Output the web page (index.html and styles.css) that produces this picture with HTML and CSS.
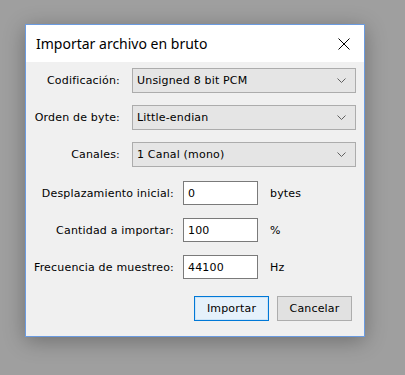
FILE: index.html
```html
<!DOCTYPE html>
<html>
<head>
<meta charset="utf-8">
<link rel="stylesheet" href="styles.css">
</head>
<body>
<div class="dialog">
  <div class="titlebar">
    <span class="title">Importar archivo en bruto</span>
    <svg class="close" width="12" height="12" viewBox="0 0 12 12"><path d="M0.5 0.5 L11.5 11.5 M11.5 0.5 L0.5 11.5" stroke="#000" stroke-width="1"/></svg>
  </div>
  <div class="content">
    <div class="combos">
      <div class="row">
        <label class="lbl lbl-a">Codificación:</label>
        <div class="combo"><span>Unsigned 8 bit PCM</span><svg class="chev" width="9" height="5" viewBox="0 0 9 5"><path d="M0.5 0.5 L4.5 4.5 L8.5 0.5" fill="none" stroke="#606060" stroke-width="1"/></svg></div>
      </div>
      <div class="row">
        <label class="lbl lbl-a">Orden de byte:</label>
        <div class="combo"><span>Little-endian</span><svg class="chev" width="9" height="5" viewBox="0 0 9 5"><path d="M0.5 0.5 L4.5 4.5 L8.5 0.5" fill="none" stroke="#606060" stroke-width="1"/></svg></div>
      </div>
      <div class="row">
        <label class="lbl lbl-a">Canales:</label>
        <div class="combo"><span>1 Canal (mono)</span><svg class="chev" width="9" height="5" viewBox="0 0 9 5"><path d="M0.5 0.5 L4.5 4.5 L8.5 0.5" fill="none" stroke="#606060" stroke-width="1"/></svg></div>
      </div>
    </div>
    <div class="fields">
      <div class="row">
        <label class="lbl lbl-b">Desplazamiento inicial:</label>
        <div class="input">0</div>
        <span class="unit">bytes</span>
      </div>
      <div class="row">
        <label class="lbl lbl-b">Cantidad a importar:</label>
        <div class="input">100</div>
        <span class="unit">%</span>
      </div>
      <div class="row">
        <label class="lbl lbl-b">Frecuencia de muestreo:</label>
        <div class="input">44100</div>
        <span class="unit">Hz</span>
      </div>
    </div>
    <div class="buttons">
      <button class="btn btn-default">Importar</button>
      <button class="btn">Cancelar</button>
    </div>
  </div>
</div>
</body>
</html>
```

FILE: styles.css
```css
html, body {
  margin: 0;
  padding: 0;
}
body {
  background: #9f9f9f;
  width: 405px;
  height: 375px;
  overflow: hidden;
  font-family: "DejaVu Sans", sans-serif;
  font-size: 11px;
  letter-spacing: 0.18px;
  color: #000;
}
.dialog {
  margin: 24px 0 0 25px;
  width: 338px;
  height: 311px;
  border: 1px solid #6b9be0;
  background: #f0f0f0;
  box-shadow: 0 4px 20px rgba(0,0,0,0.3);
  display: flex;
  flex-direction: column;
}
.titlebar {
  height: 37px;
  background: #fff;
  display: flex;
  align-items: center;
  justify-content: space-between;
  padding: 0 14px 0 10px;
}
.title {
  font-family: "Noto Sans", sans-serif;
  font-size: 14px;
  letter-spacing: 0;
  color: #000;
}
.close {
  display: block;
}
.content {
  flex: 1;
  display: flex;
  flex-direction: column;
}
.combos {
  display: flex;
  flex-direction: column;
  gap: 12px;
  padding-top: 6px;
}
.fields {
  display: flex;
  flex-direction: column;
  gap: 13px;
  padding-top: 14px;
}
.row {
  display: flex;
  align-items: center;
}
.lbl {
  text-align: right;
  flex: none;
}
.lbl-a {
  width: 94px;
  margin-right: 12px;
}
.lbl-b {
  width: 148px;
  margin-right: 9px;
}
.combo {
  width: 209px;
  height: 23px;
  border: 1px solid #acacac;
  background: #e5e5e5;
  display: flex;
  align-items: center;
  justify-content: space-between;
  padding: 0 9px 0 4px;
  box-sizing: content-box;
}
.chev {
  display: block;
}
.input {
  width: 69px;
  height: 22px;
  border: 1px solid #7a7a7a;
  background: #fff;
  display: flex;
  align-items: center;
  padding: 0 0 0 4px;
  box-sizing: content-box;
}
.unit {
  margin-left: 12px;
}
.buttons {
  display: flex;
  justify-content: flex-end;
  gap: 8px;
  padding: 17px 12px 0 0;
}
.btn {
  width: 75px;
  height: 25px;
  margin: 0;
  padding: 0;
  font-family: "DejaVu Sans", sans-serif;
  font-size: 11px;
  letter-spacing: 0.18px;
  color: #000;
  background: #e1e1e1;
  border: 1px solid #adadad;
}
.btn-default {
  background: #e5f1fb;
  border: 1px solid #0078d7;
  box-shadow: inset 0 0 0 1px #cce4f7;
}
```
